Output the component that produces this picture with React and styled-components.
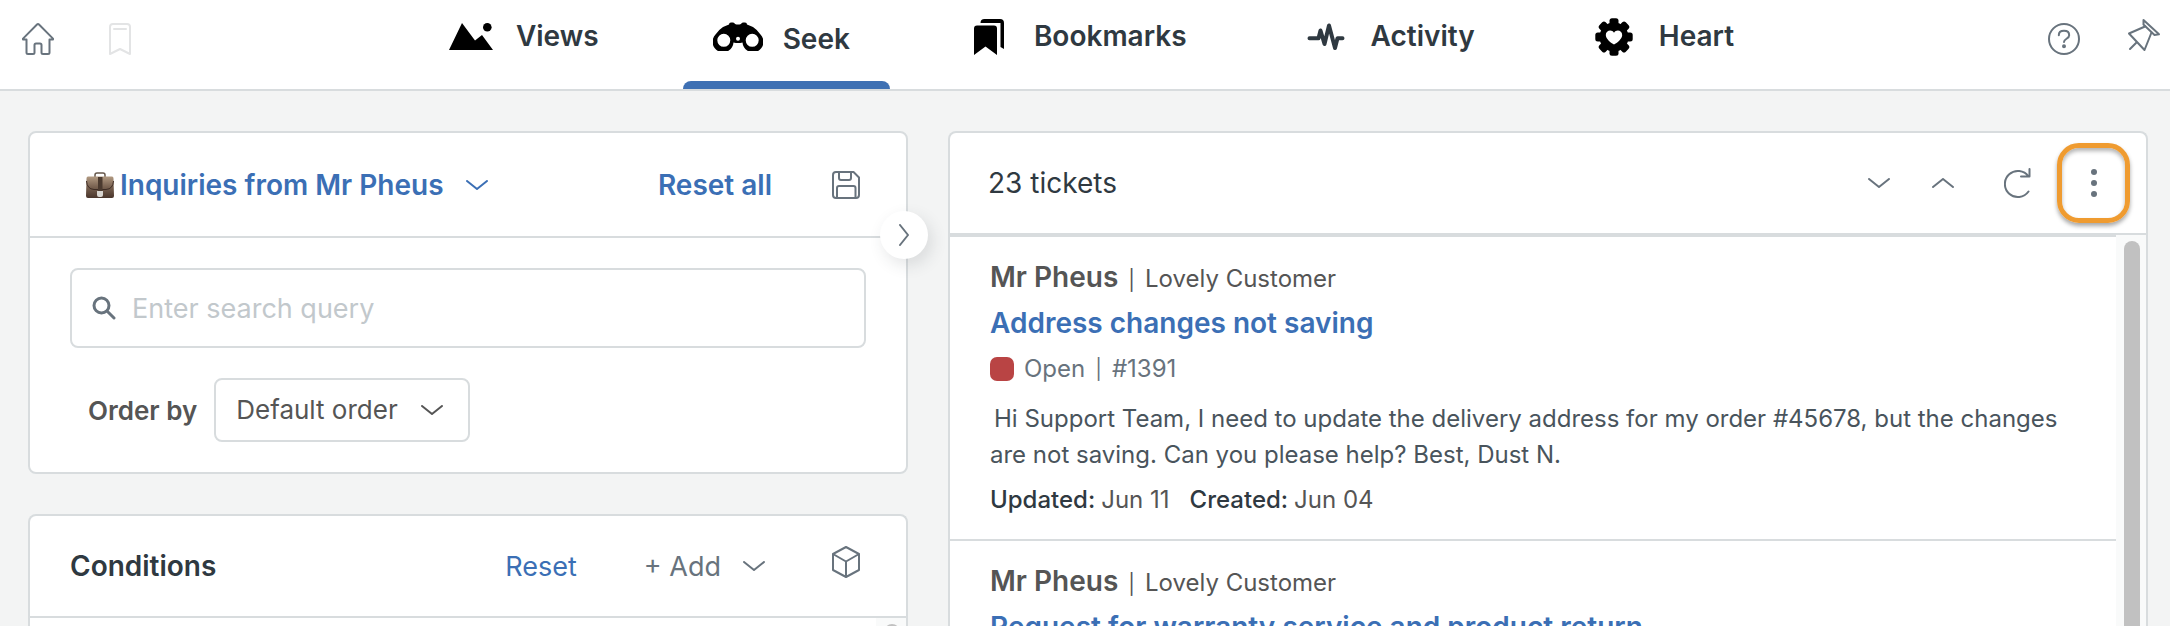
import React, { Component } from 'react';
import styled, { createGlobalStyle } from 'styled-components';

const GlobalStyle = createGlobalStyle`
    * {
        box-sizing: border-box;
    }

    body {
        margin: 0;
        background: #f3f4f4;
        color: #2f3941;
        font-family: Inter, 'Liberation Sans', sans-serif;
        font-size: 27px;
    }

    button, input, select {
        font: inherit;
        color: inherit;
    }

    svg {
        display: block;
        flex: none;
    }

    h2, h3, p {
        margin: 0;
        font: inherit;
    }
`

const Page = styled.div`
    display: flex;
    flex-direction: column;
    height: 100vh;
    overflow: hidden;
`

/* header */

const Header = styled.header`
    display: flex;
    flex: none;
    height: 91px;
    padding: 0 10px 0 22px;
    background: #fff;
    border-bottom: 2px solid #d8dcde;
`

const HeaderGroup = styled.div`
    display: flex;
    flex: 1 1 0;
    align-items: flex-start;
    justify-content: ${props => props.$end ? 'flex-end' : 'flex-start'};
    gap: ${props => props.$end ? '48px' : '55px'};
    padding-top: 23px;
`

const Nav = styled.nav`
    display: flex;
    gap: 44px;
    padding-left: 8px;
`

const Tab = styled.a`
    position: relative;
    display: flex;
    align-items: flex-start;
    gap: 20px;
    padding: 18px 40px 0 30px;
    color: #2f3941;
    font-size: 28px;
    font-weight: 600;
    line-height: 36px;
    text-decoration: none;
`

const TabMark = styled.span`
    position: absolute;
    left: 0;
    right: 0;
    bottom: 0;
    height: 8px;
    border-radius: 8px 8px 0 0;
    background: #3e70b3;
`

const TabIcon = styled.span`
    display: flex;
    align-items: center;
    justify-content: center;
    width: 50px;
    height: 37px;
`

const TabLabel = styled.span`
    padding-top: ${props => props.$active ? '3px' : '0'};
`

const PlainButton = styled.button`
    display: flex;
    align-items: center;
    gap: 22px;
    padding: 0;
    border: 0;
    background: none;
    color: ${props => props.$color || '#68737d'};
    font-size: ${props => props.$bold ? '28px' : '27px'};
    font-weight: ${props => props.$bold ? 600 : 400};
    white-space: nowrap;
    cursor: pointer;
`

/* panels */

const Main = styled.main`
    display: grid;
    grid-template-columns: 22fr 30fr;
    gap: 40px;
    flex: 1;
    min-height: 0;
    padding: 40px 22px 0 28px;
`

const Column = styled.div`
    display: flex;
    flex-direction: column;
    gap: 40px;
    min-width: 0;
    min-height: 0;
`

const Card = styled.section`
    position: relative;
    display: flex;
    flex-direction: column;
    flex: ${props => props.$grow ? '1' : 'none'};
    min-width: 0;
    min-height: 0;
    background: #fff;
    border: 2px solid #d8dcde;
    border-bottom-width: ${props => props.$grow ? '0' : '2px'};
    border-radius: ${props => props.$grow ? '8px 8px 0 0' : '8px'};
`

const CardHeader = styled.div`
    display: flex;
    flex: none;
    align-items: center;
    height: ${props => props.$tall ? '105px' : '102px'};
    padding: 0 ${props => props.$right || 46}px 0 ${props => props.$left || 40}px;
    border-bottom: 2px solid #d8dcde;
`

const Spacer = styled.div`
    flex: 1;
`

const HeaderActions = styled.div`
    display: flex;
    align-items: center;
    gap: ${props => props.$gap}px;
`

const PanelTitle = styled.h2`
    font-size: 28px;
    font-weight: 600;
    color: #2f3941;
`

const TicketCount = styled.h2`
    font-size: 28px;
    color: #2f3941;
`

const ViewName = styled.span`
    display: flex;
    align-items: center;
    gap: 6px;
`

const CollapseButton = styled.button`
    position: absolute;
    top: 78px;
    right: -22px;
    display: flex;
    align-items: center;
    justify-content: center;
    width: 48px;
    height: 48px;
    padding: 0;
    border: 0;
    border-radius: 50%;
    background: #fff;
    color: #68737d;
    box-shadow: 4px 6px 16px rgba(47, 57, 65, 0.13);
`

const SearchArea = styled.div`
    display: flex;
    flex-direction: column;
    gap: 30px;
    padding: 30px 40px;
`

const SearchBox = styled.label`
    display: flex;
    align-items: center;
    gap: 16px;
    height: 80px;
    padding: 0 20px;
    border: 2px solid #d8dcde;
    border-radius: 8px;
    color: #68737d;
`

const SearchInput = styled.input`
    flex: 1;
    min-width: 0;
    padding: 0;
    border: 0;
    outline: 0;
    background: none;
    color: #2f3941;

    &::placeholder {
        color: #c2c8cc;
        opacity: 1;
    }
`

const OrderRow = styled.div`
    display: flex;
    align-items: center;
    gap: 17px;
    padding-left: 18px;
    font-size: 26px;
    color: #555;
`

const OrderLabel = styled.label`
    font-weight: 600;
`

const SelectBox = styled.div`
    display: grid;
    align-items: center;
    width: 256px;
    height: 64px;

    > * {
        grid-area: 1 / 1;
    }

    > svg {
        justify-self: end;
        margin-right: 27px;
        pointer-events: none;
    }
`

const Select = styled.select`
    appearance: none;
    width: 100%;
    height: 100%;
    padding: 0 60px 2px 20px;
    border: 2px solid #d8dcde;
    border-radius: 8px;
    background: #fff;
`

/* scrolling parts */

const ScrollArea = styled.div`
    display: flex;
    flex: 1;
    min-height: 0;
    overflow: hidden;
`

const ScrollTrack = styled.div`
    flex: none;
    width: 30px;
    padding: 6px 6px 0 8px;
    background: #f9fafa;
`

const ScrollThumb = styled.div`
    height: 100%;
    min-height: 40px;
    border-radius: 8px 8px 0 0;
    background: #c1c1c1;
`

const TicketList = styled.div`
    flex: 1;
    min-width: 0;
`

const Ticket = styled.article`
    height: 304px;
    padding: 18px 40px 0 40px;
    border-top: 2px solid #d8dcde;
    font-size: 24px;
    color: #555;
`

const TicketFrom = styled.div`
    display: flex;
    align-items: baseline;
    gap: 10px;
    line-height: 44px;
`

const Sender = styled.strong`
    font-size: 28px;
    font-weight: 600;
`

const Pipe = styled.span`
    font-size: 20px;
`

const Subject = styled.h3`
    font-size: 28px;
    font-weight: 600;
    line-height: 42px;
`

const SubjectLink = styled.a`
    color: #3b6fb5;
    text-decoration: none;
`

const Status = styled.div`
    display: flex;
    align-items: center;
    gap: 10px;
    line-height: 50px;
    color: #68737d;
`

const StatusDot = styled.span`
    width: 24px;
    height: 24px;
    border-radius: 7px;
    background: #b94444;
`

const Message = styled.p`
    margin-top: 7px;
    line-height: 36px;
    color: #49545c;
    text-indent: 4px;
`

const Dates = styled.div`
    display: flex;
    gap: 20px;
    margin-top: 9px;
    line-height: 36px;
`

const DateItem = styled.span`
    display: flex;
    gap: 6px;
`

const DateName = styled.span`
    font-weight: 500;
    color: #2f3941;
`

const MenuButton = styled.button`
    display: flex;
    align-items: center;
    justify-content: center;
    width: 73px;
    height: 80px;
    padding: 0;
    border: 5px solid #ef9b30;
    border-radius: 22px;
    background: none;
    color: #68737d;
    box-shadow: 0 3px 4px rgba(0, 0, 0, 0.35), inset 0 3px 4px rgba(0, 0, 0, 0.3);
`

/* icons */

const Line = ({ w, h, stroke = 2, children }) => (
    <svg width={w} height={h} viewBox={`0 0 ${w} ${h}`} fill="none" stroke="currentColor"
        strokeWidth={stroke} strokeLinecap="round" strokeLinejoin="round" aria-hidden="true">
        {children}
    </svg>
)

const Chevron = () => <Line w={22} h={10}><path d="M1 1L11 9L21 1" /></Line>
const ChevronUp = () => <Line w={22} h={10}><path d="M1 9L11 1L21 9" /></Line>
const ChevronRight = () => <Line w={10} h={22}><path d="M1 1L9 11L1 21" /></Line>

const HomeIcon = () => (
    <Line w={32} h={32}>
        <path d="M1 15.6L15 1.5q1-1 2 0L31 15.6V16.6H27.5V29.5q0 1.5-1.5 1.5H21q-1.5 0-1.5-1.5V22q0-1.5-1.5-1.5H14q-1.5 0-1.5 1.5V29.5q0 1.5-1.5 1.5H6q-1.5 0-1.5-1.5V16.6H1Z" />
    </Line>
)

const BookmarkIcon = () => (
    <Line w={22} h={32}>
        <path d="M1 31V4a3 3 0 0 1 3-3h14a3 3 0 0 1 3 3v27l-10-5z" />
        <path d="M5 6h12" />
    </Line>
)

const ViewsIcon = () => (
    <svg width="44" height="27" viewBox="0 0 44 27" aria-hidden="true">
        <path d="M0 27L13 0L26 17.5L33 12L44 27Z" />
        <circle cx="38.3" cy="4.3" r="4.3" />
    </svg>
)

const SeekIcon = () => (
    <svg width="50" height="29" viewBox="0 0 50 29" aria-hidden="true">
        <path fillRule="evenodd" d="M16 2.5Q16 .5 18 .5H20Q21.5 .5 22 2Q25 3 28 2Q28.5 .5 30 .5H32Q34 .5 34 2.5L40 5Q44 7.5 47.5 12.5A10.5 10.5 0 1 1 29.5 20.5Q25 21.5 20.5 20.5A10.5 10.5 0 1 1 2.5 12.5Q6 7.5 10 5ZM17.3 18.3a6.5 6.5 0 1 0-13 0a6.5 6.5 0 1 0 13 0ZM45.7 18.3a6.5 6.5 0 1 0-13 0a6.5 6.5 0 1 0 13 0ZM27 16.8a2 2 0 1 0-4 0a2 2 0 1 0 4 0Z" />
    </svg>
)

const BookmarksIcon = () => (
    <svg width="30" height="36" viewBox="0 0 30 36" aria-hidden="true">
        <path d="M0 36V9.5Q0 6.5 3 6.5H20Q23 6.5 23 9.5V36L11.5 27.5Z" />
        <path d="M6.500 4Q6.500 0 10.500 0H26Q30 0 30 4V30L26.500 28V4H6.500Z" />
    </svg>
)

const ActivityIcon = () => (
    <Line w={38} h={28} stroke={4}>
        <path d="M2.5 15.3H11.5L13.5 7.5L17.5 21L22 2.5L28 25L30.5 15.3H35.5" />
    </Line>
)

const HeartIcon = () => (
    <svg width="38" height="38" viewBox="-19 -19 38 38" aria-hidden="true">
        <circle r="14.5" />
        {[0, 45, 90, 135, 180, 225, 270, 315].map(angle => (
            <rect key={angle} x="-4.5" y="-18.7" width="9" height="9" rx="2.5" transform={`rotate(${angle})`} />
        ))}
        <path fill="#fff" d="M0 7.5C-3 6-8.2 2-8.2-2C-8.2-7-2-8 0-4.3C2-8 8.2-7 8.2-2C8.2 2 3 6 0 7.5Z" />
    </svg>
)

const HelpIcon = () => (
    <Line w={32} h={32}>
        <circle cx="16" cy="16" r="15" />
        <path d="M10.8 12.2C10.8 9.5 13 7.8 16 7.8S21.2 9.5 21.2 12.2C21.2 16 16 15.5 16 19" />
        <circle cx="16" cy="23.3" r="1" fill="currentColor" />
    </Line>
)

// the pin sits at the top of its box, a little above the help circle
const PinIcon = () => (
    <svg width="32" height="32" viewBox="0 4 32 32" fill="none" stroke="currentColor"
        strokeWidth="2" strokeLinecap="round" strokeLinejoin="round" overflow="visible" aria-hidden="true">
        <path d="M15.5 1L31 15.3L26.5 16L15.5 5.5Z" />
        <path d="M17 7.5L1 14.5L16.5 31L23.5 13.5M8.5 23.5L2 30" />
    </svg>
)

const SaveIcon = () => (
    <Line w={28} h={28}>
        <path d="M4 1H21.5L27 6.5V24a3 3 0 0 1-3 3H4a3 3 0 0 1-3-3V4a3 3 0 0 1 3-3Z" />
        <path d="M7 1V7a2 2 0 0 0 2 2H17a2 2 0 0 0 2-2V1M5 27V17a2 2 0 0 1 2-2H21.5a2 2 0 0 1 2 2V27" />
    </Line>
)

const CubeIcon = () => (
    <Line w={28} h={40}>
        <path d="M14 1L27 8V24L14 31L1 24V8ZM1 8L14 15.5L27 8M14 15.5V31" />
    </Line>
)

const SearchIcon = () => (
    <Line w={24} h={24} stroke={3}>
        <circle cx="9.5" cy="9.5" r="7.5" />
        <path d="M15 15L22 22" />
    </Line>
)

const RefreshIcon = () => (
    <Line w={27} h={31}>
        <path d="M24.5 8.5A13 13 0 1 0 24.5 23.5M25.5 1V8.5H17" />
    </Line>
)

const DotsIcon = () => (
    <svg width="6" height="28" viewBox="0 0 6 28" fill="currentColor" aria-hidden="true">
        <circle cx="3" cy="3" r="3" />
        <circle cx="3" cy="14" r="3" />
        <circle cx="3" cy="25" r="3" />
    </svg>
)

const BriefcaseIcon = () => (
    <svg width="28" height="26" viewBox="0 0 28 26" aria-hidden="true">
        <defs>
            <linearGradient id="leather" x1="0" y1="0" x2="0" y2="1">
                <stop offset="0" stopColor="#b29a82" />
                <stop offset="0.5" stopColor="#77604f" />
                <stop offset="1" stopColor="#49352b" />
            </linearGradient>
        </defs>
        <path d="M9 5V3q0-2 2-2h6q2 0 2 2v2" fill="none" stroke="#65574b" strokeWidth="1.5" />
        <path d="M2 4.5H26q1.5 0 1.5 2L28 24q0 2-2 2H2q-2 0-2-2L.5 6.5q0-2 1.5-2Z" fill="url(#leather)" />
        <path d="M.5 9Q1 17 8 17.5H20Q27 17 27.5 9" fill="none" stroke="#3d2c24" strokeWidth="1" />
        <path d="M12 5H16.5V19H12Z" fill="#4b3a2f" />
        <path d="M11 19H17V23q0 2-2 2H13q-2 0-2-2Z" fill="#d9d5d0" />
    </svg>
)

const tabs = [
    { name: 'Views', icon: <ViewsIcon /> },
    { name: 'Seek', icon: <SeekIcon />, active: true },
    { name: 'Bookmarks', icon: <BookmarksIcon /> },
    { name: 'Activity', icon: <ActivityIcon /> },
    { name: 'Heart', icon: <HeartIcon /> },
]

const tickets = [
    {
        id: 1391,
        subject: 'Address changes not saving',
        message: 'Hi Support Team, I need to update the delivery address for my order #45678, but the changes are not saving. Can you please help? Best, Dust N.',
        updated: 'Jun 11',
        created: 'Jun 04',
    },
    {
        subject: 'Request for warranty service and product return',
    },
]

class App extends Component {
    constructor(props) {
        super(props);

        this.state = {
            query: '',
            order: 'default',
        }
    }

    handleChangeQuery = event => {
        this.setState({ query: event.target.value });
    }

    handleChangeOrder = event => {
        this.setState({ order: event.target.value });
    }

    renderTicket = ticket => (
        <Ticket key={ticket.subject}>
            <TicketFrom>
                <Sender>Mr Pheus</Sender>
                <Pipe>|</Pipe>
                <span>Lovely Customer</span>
            </TicketFrom>
            <Subject><SubjectLink href="#ticket">{ticket.subject}</SubjectLink></Subject>
            {ticket.id && (
                <>
                    <Status>
                        <StatusDot />
                        <span>Open</span>
                        <Pipe>|</Pipe>
                        <span>#{ticket.id}</span>
                    </Status>
                    <Message>{ticket.message}</Message>
                    <Dates>
                        <DateItem><DateName>Updated:</DateName>{ticket.updated}</DateItem>
                        <DateItem><DateName>Created:</DateName>{ticket.created}</DateItem>
                    </Dates>
                </>
            )}
        </Ticket>
    )

    render() {
        const { query, order } = this.state;
        return (
            <Page>
                <GlobalStyle />
                <Header>
                    <HeaderGroup>
                        <PlainButton aria-label="Home"><HomeIcon /></PlainButton>
                        <PlainButton aria-label="Bookmark" $color="#e3e4e5"><BookmarkIcon /></PlainButton>
                    </HeaderGroup>
                    <Nav>
                        {tabs.map(tab => (
                            <Tab key={tab.name} href={`#${tab.name.toLowerCase()}`}>
                                <TabIcon>{tab.icon}</TabIcon>
                                <TabLabel $active={tab.active}>{tab.name}</TabLabel>
                                {tab.active && <TabMark />}
                            </Tab>
                        ))}
                    </Nav>
                    <HeaderGroup $end>
                        <PlainButton aria-label="Help"><HelpIcon /></PlainButton>
                        <PlainButton aria-label="Pin"><PinIcon /></PlainButton>
                    </HeaderGroup>
                </Header>

                <Main>
                    <Column>
                        <Card>
                            <CardHeader $tall $left={56}>
                                <PlainButton $color="#3b6fb5" $bold>
                                    <ViewName><BriefcaseIcon />Inquiries from Mr Pheus</ViewName>
                                    <Chevron />
                                </PlainButton>
                                <Spacer />
                                <HeaderActions $gap={60}>
                                    <PlainButton $color="#3b6fb5" $bold>Reset all</PlainButton>
                                    <PlainButton aria-label="Save"><SaveIcon /></PlainButton>
                                </HeaderActions>
                            </CardHeader>
                            <SearchArea>
                                <SearchBox>
                                    <SearchIcon />
                                    <SearchInput
                                        type="text"
                                        aria-label="Search"
                                        placeholder="Enter search query"
                                        value={query}
                                        onChange={this.handleChangeQuery}
                                    />
                                </SearchBox>
                                <OrderRow>
                                    <OrderLabel htmlFor="order">Order by</OrderLabel>
                                    <SelectBox>
                                        <Select id="order" value={order} onChange={this.handleChangeOrder}>
                                            <option value="default">Default order</option>
                                        </Select>
                                        <Chevron />
                                    </SelectBox>
                                </OrderRow>
                            </SearchArea>
                            <CollapseButton aria-label="Collapse"><ChevronRight /></CollapseButton>
                        </Card>

                        <Card $grow>
                            <CardHeader>
                                <PanelTitle>Conditions</PanelTitle>
                                <Spacer />
                                <HeaderActions $gap={67}>
                                    <PlainButton $color="#3b6fb5">Reset</PlainButton>
                                    <PlainButton>+ Add <Chevron /></PlainButton>
                                    <PlainButton aria-label="Apps"><CubeIcon /></PlainButton>
                                </HeaderActions>
                            </CardHeader>
                            <ScrollArea>
                                <Spacer />
                                <ScrollTrack><ScrollThumb /></ScrollTrack>
                            </ScrollArea>
                        </Card>
                    </Column>

                    <Card $grow>
                        <CardHeader $left={38} $right={16}>
                            <TicketCount>23 tickets</TicketCount>
                            <Spacer />
                            <HeaderActions $gap={50}>
                                <HeaderActions $gap={42}>
                                    <PlainButton aria-label="Next"><Chevron /></PlainButton>
                                    <PlainButton aria-label="Previous"><ChevronUp /></PlainButton>
                                </HeaderActions>
                                <HeaderActions $gap={26}>
                                    <PlainButton aria-label="Refresh"><RefreshIcon /></PlainButton>
                                    <MenuButton aria-label="More"><DotsIcon /></MenuButton>
                                </HeaderActions>
                            </HeaderActions>
                        </CardHeader>
                        <ScrollArea>
                            <TicketList>{tickets.map(this.renderTicket)}</TicketList>
                            <ScrollTrack><ScrollThumb /></ScrollTrack>
                        </ScrollArea>
                    </Card>
                </Main>
            </Page>
        )
    }
}

export default App;
